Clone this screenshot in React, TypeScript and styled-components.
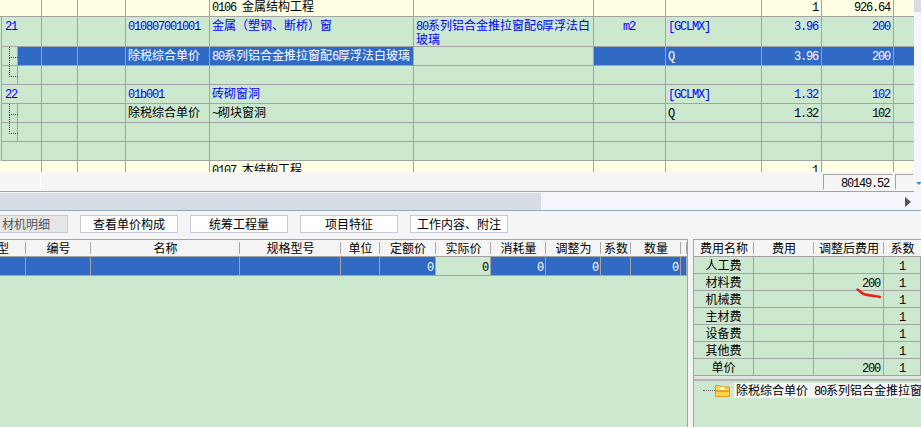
import styled, { createGlobalStyle } from "styled-components";

const LINE = "#a3a3a3";
const GREEN = "#cce8cf";
const BLUE = "#316ac5";
const PANEL = "#f5f5f5";
const SCROLL = "#f4f6fb";
const THUMB = "#d8dce5";

const GlobalStyle = createGlobalStyle`
  html, body {
    margin: 0;
    background: ${PANEL};
    overflow: hidden;
  }
  * {
    box-sizing: border-box;
  }
`;

const Page = styled.div`
  width: 921px;
  height: 427px;
  display: flex;
  flex-direction: column;
  overflow: hidden;
  position: relative;
  font-family: "Noto Sans CJK SC", "Liberation Sans", sans-serif;
  font-size: 12px;
  color: #000;
`;

/* Top grid */
const TopArea = styled.div`
  display: flex;
  height: 193px;
  flex: none;
`;

const TopLeft = styled.div`
  width: 914px;
  display: flex;
  flex-direction: column;
`;

const VScroll = styled.div`
  width: 7px;
  background: ${SCROLL};
  position: relative;
  &::before {
    content: "";
    display: block;
    height: 12px;
    background: ${THUMB};
  }
  &::after {
    content: "";
    position: absolute;
    left: 2px;
    top: 182px;
    border-left: 3px solid transparent;
    border-right: 3px solid transparent;
    border-top: 3px solid #3a8fd0;
  }
`;

const Rows = styled.div`
  height: 172px;
  overflow: hidden;
`;

const TopRow = styled.div<{ $h: number; $yellow?: boolean }>`
  height: ${(p) => p.$h}px;
  display: grid;
  grid-template-columns: 18px 24px 36px 48px 84px 204px 180px 72px 96px 60px 72px 20px;
  background: ${(p) => (p.$yellow ? "#ffffe4" : GREEN)};
`;

const Cell = styled.div<{
  $span?: boolean;
  $selected?: boolean;
  $tone?: "blue" | "white" | "black";
  $align?: "left" | "center" | "right";
  $wrap?: boolean;
  $last?: boolean;
  $tight?: boolean;
}>`
  grid-column: ${(p) => (p.$span ? "span 2" : "auto")};
  position: relative;
  background: ${(p) => (p.$selected ? BLUE : "transparent")};
  color: ${(p) =>
    p.$tone === "blue" ? "#0000ff" : p.$tone === "white" ? "#fff" : "#000"};
  border-bottom: 1px solid ${LINE};
  border-right: ${(p) => (p.$last ? "none" : `1px solid ${LINE}`)};
  text-align: ${(p) => p.$align || "left"};
  padding: ${(p) => (p.$tight ? "0" : "2px")} ${(p) => (p.$wrap ? "0" : "3px")} 0 2px;
  line-height: 12px;
  white-space: ${(p) => (p.$wrap ? "normal" : "nowrap")};
`;

const FirstCell = styled(Cell)`
  padding-left: 3px;
  margin-left: 1px;
  border-left: 1px solid ${LINE};
`;

const YellowFirst = styled(Cell)`
  padding-left: 4px;
`;

const TreeCell = styled(Cell)<{ $end?: boolean }>`
  margin-left: 1px;
  border-left: 1px solid ${LINE};
  &::before {
    content: "";
    position: absolute;
    left: 7px;
    top: 0;
    width: 8px;
    height: 10px;
    border-left: 1px dotted #444;
    border-bottom: 1px dotted #444;
  }
  &::after {
    content: "";
    display: ${(p) => (p.$end ? "none" : "block")};
    position: absolute;
    left: 7px;
    top: 10px;
    height: 8px;
    border-left: 1px dotted #444;
  }
`;

const Mono = styled.span`
  font-family: "Liberation Mono", monospace;
  font-size: 12px;
  letter-spacing: -1.2px;
`;

const FooterBar = styled.div`
  height: 20px;
  background: ${PANEL};
  border-bottom: 1px solid ${LINE};
  display: flex;
  align-items: flex-start;
  gap: 2px;
  padding-top: 2px;
`;

const FooterBox = styled.div<{ $w: number }>`
  width: ${(p) => p.$w}px;
  height: 16px;
  border: 1px solid #fff;
  border-top-color: ${LINE};
  border-left-color: ${LINE};
  text-align: right;
  padding-right: 3px;
  line-height: 14px;
`;

const FooterLeft = styled.div`
  width: 41px;
  height: 16px;
  border-right: 1px solid #fff;
  border-bottom: 1px solid #fff;
  margin-right: auto;
`;

const HScroll = styled.div`
  height: 18px;
  flex: none;
  display: flex;
  background: ${SCROLL};
  border-bottom: 1px solid #93a9b8;
`;

const HThumb = styled.div`
  width: 541px;
  background: ${THUMB};
`;

const HArrow = styled.div`
  margin: 4px 10px 0 auto;
  width: 0;
  height: 0;
  border-top: 5px solid transparent;
  border-bottom: 5px solid transparent;
  border-left: 6px solid #555;
`;

/* Toolbar */
const Toolbar = styled.div`
  height: 28px;
  flex: none;
  display: flex;
  gap: 12px;
  padding-top: 4px;
  background: ${PANEL};
`;

const Tab = styled.div<{ $active?: boolean }>`
  width: ${(p) => (p.$active ? "84px" : "98px")};
  margin-left: ${(p) => (p.$active ? "-16px" : "0")};
  height: 18px;
  border: 1px solid #c6cad6;
  background: ${(p) => (p.$active ? "#e6e6e6" : "#fff")};
  color: ${(p) => (p.$active ? "#555" : "#000")};
  text-align: center;
  line-height: 16px;
`;

/* Lower panels */
const Lower = styled.div`
  flex: 1;
  display: flex;
  gap: 5px;
  min-height: 0;
`;

const MaterialPanel = styled.div`
  width: 688px;
  background: ${GREEN};
  border-top: 1px solid ${LINE};
  border-right: 1px solid ${LINE};
  overflow: hidden;
`;

const MaterialGrid = styled.div`
  display: grid;
  grid-template-columns: 26px 65px 149px 101px 39px 56px 55px 55px 55px 30px 50px 6px;
`;

const HeadCell = styled.div`
  height: 17px;
  background: ${PANEL};
  border-bottom: 1px solid ${LINE};
  text-align: center;
  line-height: 15px;
  white-space: nowrap;
  position: relative;
  &::after {
    content: "";
    position: absolute;
    right: 0;
    top: 2px;
    bottom: 2px;
    width: 1px;
    background: #a8a8a8;
  }
`;

const TypeHead = styled(HeadCell)`
  margin-left: -32px;
`;

const BodyCell = styled.div<{ $selected?: boolean }>`
  height: 19px;
  background: ${(p) => (p.$selected ? BLUE : "transparent")};
  color: ${(p) => (p.$selected ? "#fff" : "#000")};
  border-right: 1px solid ${LINE};
  border-bottom: 1px solid ${LINE};
  text-align: right;
  padding: 2px 2px 0 0;
  line-height: 14px;
`;

const FeePanel = styled.div`
  width: 228px;
  background: ${GREEN};
  border-top: 1px solid ${LINE};
  border-left: 1px solid ${LINE};
  overflow: hidden;
`;

const FeeGrid = styled.div`
  display: grid;
  grid-template-columns: 60px 60px 70px 37px;
`;

const FeeHead = styled(HeadCell)`
  &:nth-child(4)::after {
    display: none;
  }
`;

const FeeCell = styled.div<{ $align: "center" | "right" }>`
  height: 17px;
  border-right: 1px solid ${LINE};
  border-bottom: 1px solid ${LINE};
  text-align: ${(p) => p.$align};
  padding-right: ${(p) => (p.$align === "right" ? "3px" : "0")};
  line-height: 15px;
  white-space: nowrap;
`;

const Divider = styled.div`
  height: 5px;
  border-bottom: 2px solid #b4b4b4;
  background: #dfe5df;
`;

const TreeRow = styled.div`
  display: flex;
  align-items: center;
  height: 15px;
  margin-top: 2px;
  padding-left: 9px;
  white-space: nowrap;
  svg {
    flex: none;
  }
`;

const TreeDots = styled.div`
  flex: none;
  width: 12px;
  border-top: 1px dotted #666;
`;

const TreeLabel = styled.div`
  flex: 1;
  min-width: 0;
  overflow: hidden;
  margin-left: 4px;
  padding-left: 2px;
  height: 15px;
  line-height: 14px;
  background: ${PANEL};
`;

const RedMark = styled.svg`
  position: absolute;
  left: 855px;
  top: 287px;
`;

const LATIN_SPLIT = /([\x20-\x7e]+)/;

// latin runs are set in a narrower face so they stay half of a CJK cell
function T({ text }: { text: string }) {
  return (
    <>
      {text.split(LATIN_SPLIT).map((part, i) =>
        i % 2 ? <Mono key={i}>{part.replace(/ /g, "\u00a0")}</Mono> : part
      )}
    </>
  );
}

interface ITopRow {
  h: number;
  kind: "yellow" | "item" | "mid" | "end" | "plain";
  no?: string;
  selected?: boolean;
  blue?: boolean;
  tight?: boolean;
  cells: string[];
}

const ROWS: ITopRow[] = [
  { h: 17, kind: "yellow", tight: true, cells: ["", "", "", "0106 金属结构工程", "", "", "", "1", "926.64", ""] },
  {
    h: 30,
    kind: "item",
    no: "21",
    blue: true,
    cells: ["", "", "010807001001", "金属（塑钢、断桥）窗", "80系列铝合金推拉窗配6厚浮法白玻璃", "m2", "[GCLMX]", "3.96", "200", ""],
  },
  {
    h: 19,
    kind: "mid",
    selected: true,
    cells: ["", "", "除税综合单价", "80系列铝合金推拉窗配6厚浮法白玻璃", "", "", "Q", "3.96", "200", ""],
  },
  { h: 19, kind: "end", cells: ["", "", "", "", "", "", "", "", "", ""] },
  {
    h: 19,
    kind: "item",
    no: "22",
    blue: true,
    cells: ["", "", "01b001", "砖砌窗洞", "", "", "[GCLMX]", "1.32", "102", ""],
  },
  { h: 19, kind: "mid", cells: ["", "", "除税综合单价", "~砌块窗洞", "", "", "Q", "1.32", "102", ""] },
  { h: 19, kind: "end", cells: ["", "", "", "", "", "", "", "", "", ""] },
  { h: 19, kind: "plain", cells: ["", "", "", "", "", "", "", "", "", ""] },
  { h: 12, kind: "yellow", cells: ["", "", "", "0107 木结构工程", "", "", "", "1", "", ""] },
];

const TOP_ALIGN: ("left" | "center" | "right")[] = [
  "left", "left", "left", "left", "left", "center", "left", "right", "right", "left",
];

const MATERIAL_HEADS = ["编号", "名称", "规格型号", "单位", "定额价", "实际价", "消耗量", "调整为", "系数", "数量", ""];
const MATERIAL_CELLS = ["", "", "", "", "", "0", "0", "0", "0", "", "0", ""];

const FEES = [
  ["人工费", "", "", "1"],
  ["材料费", "", "200", "1"],
  ["机械费", "", "", "1"],
  ["主材费", "", "", "1"],
  ["设备费", "", "", "1"],
  ["其他费", "", "", "1"],
  ["单价", "", "200", "1"],
];

function FolderIcon() {
  return (
    <svg width="15" height="13" viewBox="0 0 15 13">
      <path d="M.5 12.5V1.5h5L7 3h7.5v9.5z" fill="#ffd34d" stroke="#e39a16" />
      <path d="M3 6 5.5 3h3L11 6z" fill="#fff6d8" />
      <rect x="1" y="6" width="13" height="2" fill="#e9a520" />
    </svg>
  );
}

function GridRow({ row }: { row: ITopRow }) {
  const tone = row.selected ? "white" : row.blue ? "blue" : "black";
  const yellow = row.kind === "yellow";
  return (
    <TopRow $h={row.h} $yellow={yellow}>
      {yellow && <YellowFirst $span />}
      {(row.kind === "item" || row.kind === "plain") && (
        <FirstCell $span $tone={tone}>
          <T text={row.no || ""} />
        </FirstCell>
      )}
      {(row.kind === "mid" || row.kind === "end") && (
        <>
          <TreeCell $end={row.kind === "end"} />
          <Cell $selected={row.selected} />
        </>
      )}
      {row.cells.map((text, i) => (
        <Cell
          key={i}
          $selected={row.selected && i !== 4}
          $tone={tone}
          $align={TOP_ALIGN[i]}
          $wrap={i === 4}
          $last={i === 9}
          $tight={row.tight}
        >
          <T text={text} />
        </Cell>
      ))}
    </TopRow>
  );
}

export default function App() {
  return (
    <Page>
      <GlobalStyle />
      <TopArea>
        <TopLeft>
          <Rows>
            {ROWS.map((row, i) => (
              <GridRow key={i} row={row} />
            ))}
          </Rows>
          <FooterBar>
            <FooterLeft />
            <FooterBox $w={70}>
              <Mono>80149.52</Mono>
            </FooterBox>
            <FooterBox $w={19} />
          </FooterBar>
        </TopLeft>
        <VScroll />
      </TopArea>
      <HScroll>
        <HThumb />
        <HArrow />
      </HScroll>
      <Toolbar>
        <Tab $active>材机明细</Tab>
        <Tab>查看单价构成</Tab>
        <Tab>统筹工程量</Tab>
        <Tab>项目特征</Tab>
        <Tab>工作内容、附注</Tab>
      </Toolbar>
      <Lower>
        <MaterialPanel>
          <MaterialGrid>
            <TypeHead>类型</TypeHead>
            {MATERIAL_HEADS.map((h, i) => (
              <HeadCell key={i}>{h}</HeadCell>
            ))}
            {MATERIAL_CELLS.map((v, i) => (
              <BodyCell key={i} $selected={i !== 6}>
                <Mono>{v}</Mono>
              </BodyCell>
            ))}
          </MaterialGrid>
        </MaterialPanel>
        <FeePanel>
          <FeeGrid>
            <FeeHead>费用名称</FeeHead>
            <FeeHead>费用</FeeHead>
            <FeeHead>调整后费用</FeeHead>
            <FeeHead>系数</FeeHead>
            {FEES.map((fee) =>
              fee.map((v, i) => (
                <FeeCell key={fee[0] + i} $align={i === 0 || i === 3 ? "center" : "right"}>
                  <T text={v} />
                </FeeCell>
              ))
            )}
          </FeeGrid>
          <Divider />
          <TreeRow>
            <TreeDots />
            <FolderIcon />
            <TreeLabel>
              <T text="除税综合单价 80系列铝合金推拉窗配6厚浮法白玻璃" />
            </TreeLabel>
          </TreeRow>
        </FeePanel>
      </Lower>
      <RedMark width="30" height="14" viewBox="0 0 30 14">
        <path
          d="M2.5 2.5C5 4 7 7 10 7.5C14 8.5 20 9 25 10"
          fill="none"
          stroke="#ee1c1c"
          strokeWidth="2.5"
          strokeLinecap="round"
        />
      </RedMark>
    </Page>
  );
}
